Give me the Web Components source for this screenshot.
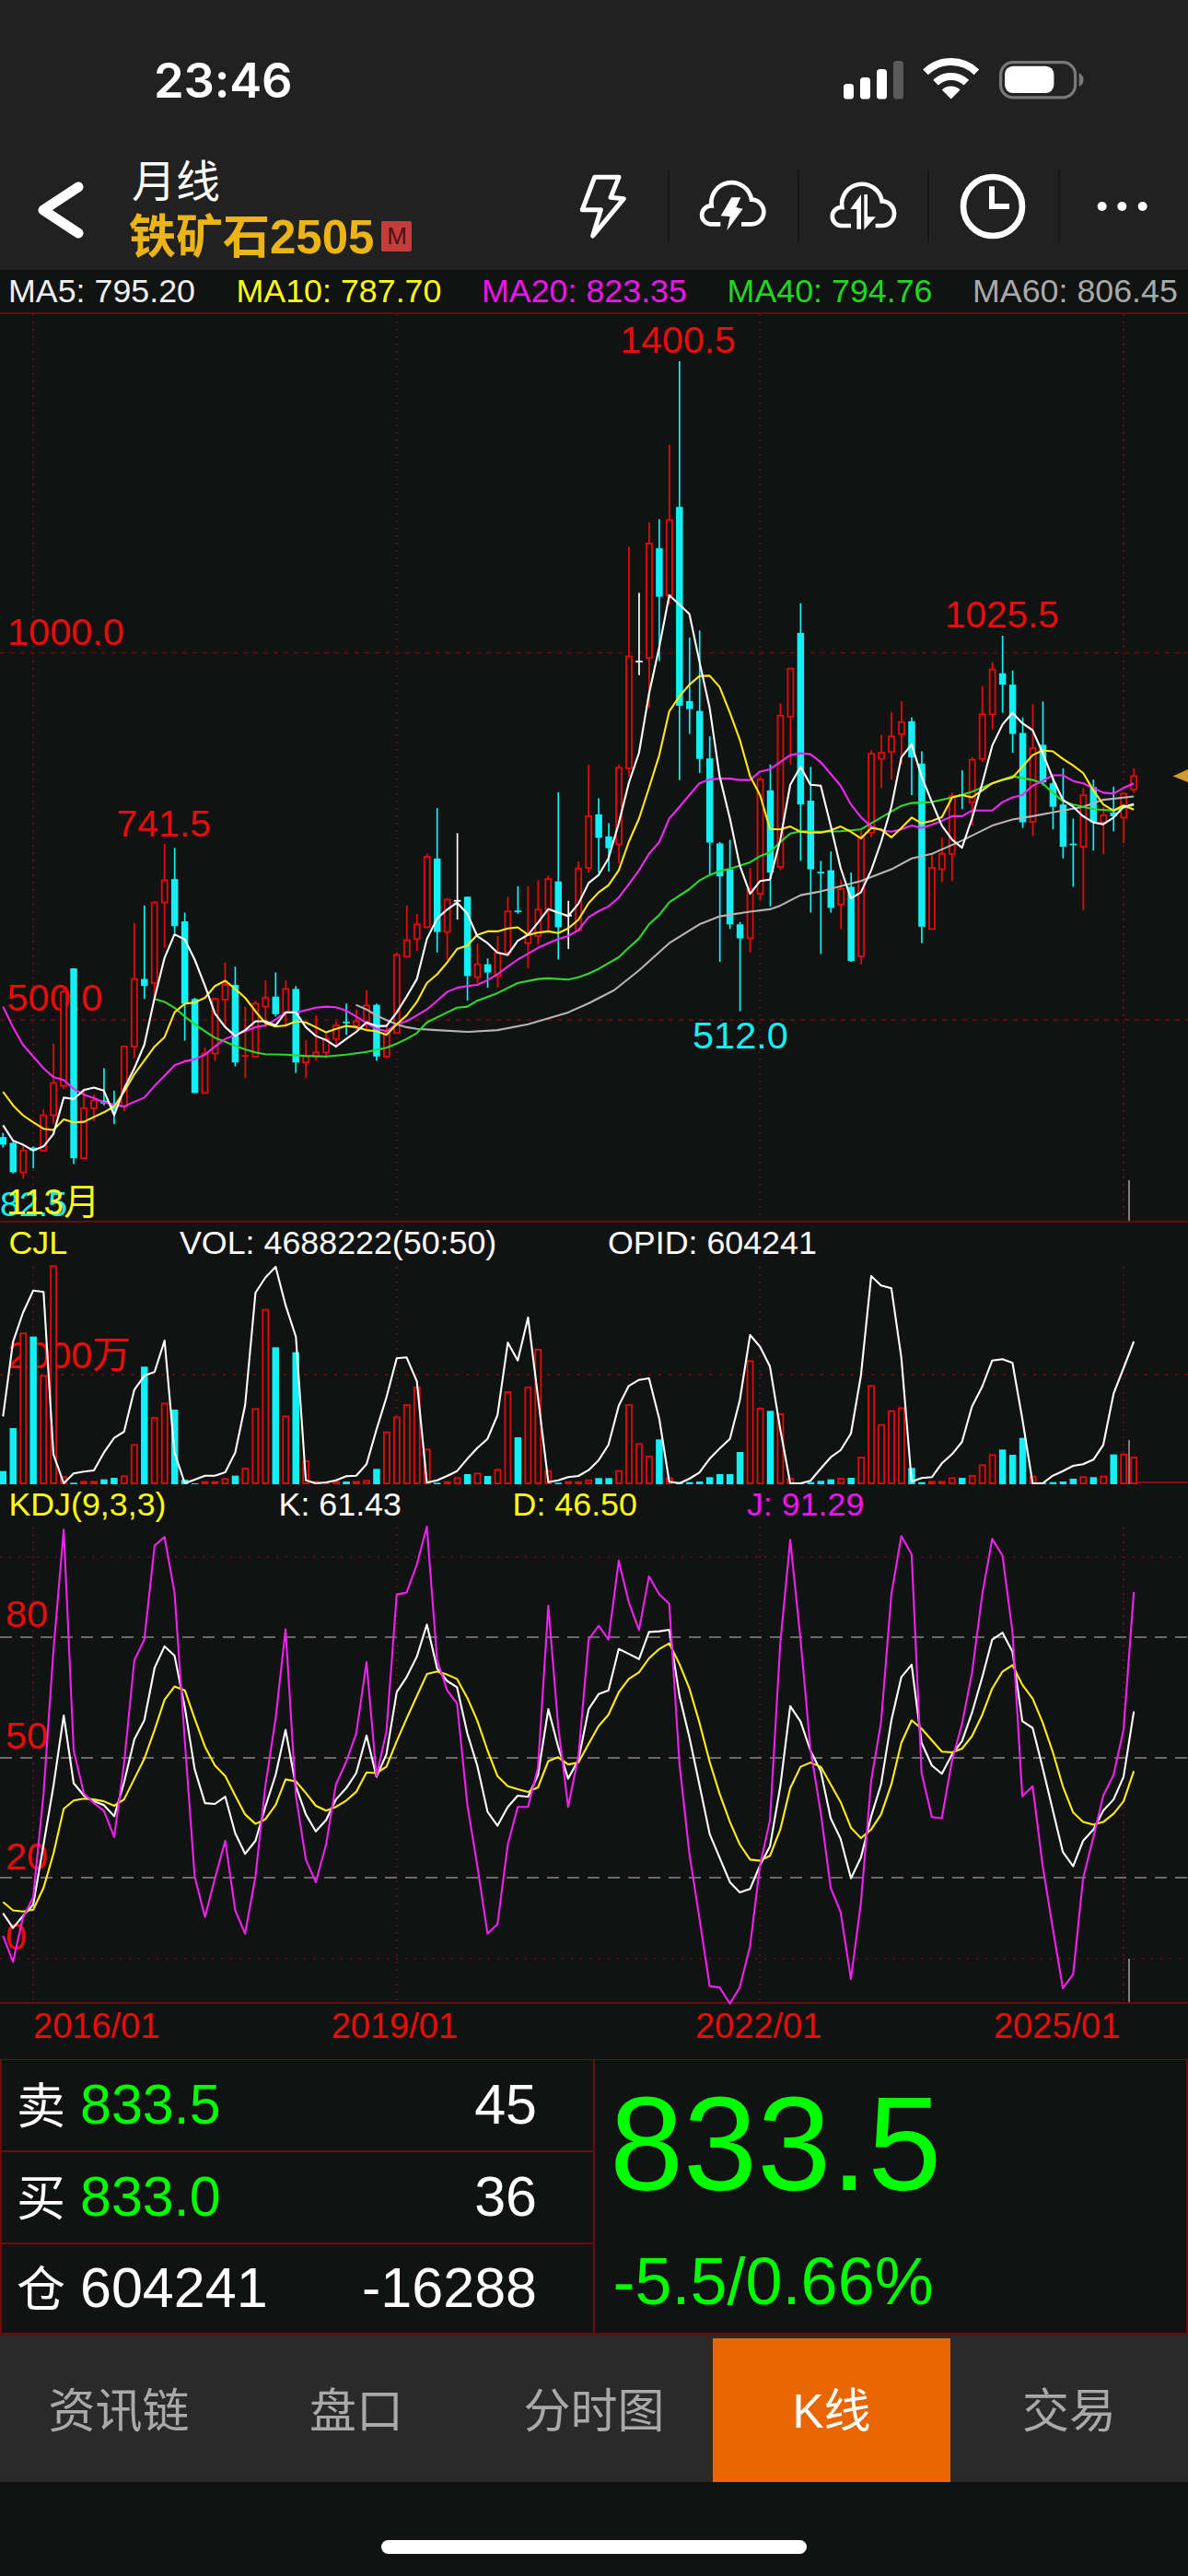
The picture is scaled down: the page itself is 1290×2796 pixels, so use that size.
<!DOCTYPE html>
<html lang="zh"><head><meta charset="utf-8"><title>K线</title>
<style>
html,body{margin:0;padding:0;background:#101311;}
body{width:1290px;height:2796px;overflow:hidden;font-family:"Liberation Sans","Noto Sans CJK SC",sans-serif;color:#fff;}
</style></head><body>
<status-bar></status-bar>
<nav-bar></nav-bar>
<ma-legend>
  <span style="color:#f0f0f0">MA5: 795.20</span>
  <span style="color:#ffff14">MA10: 787.70</span>
  <span style="color:#f014f0">MA20: 823.35</span>
  <span style="color:#1fd81f">MA40: 794.76</span>
  <span style="color:#a9a9a9">MA60: 806.45</span>
</ma-legend>
<chart-panel kind="price"></chart-panel>
<chart-panel kind="vol" columns="185.6px 465px auto">
  <span style="color:#ffff14">CJL</span>
  <span>VOL: 4688222(50:50)</span>
  <span>OPID: 604241</span>
</chart-panel>
<chart-panel kind="kdj" columns="293.2px 254px 254.4px auto">
  <span style="color:#ffff14">KDJ(9,3,3)</span>
  <span>K: 61.43</span>
  <span style="color:#ffff14">D: 46.50</span>
  <span style="color:#f014f0">J: 91.29</span>
</chart-panel>
<date-axis><span>2016/01</span><span>2019/01</span><span>2022/01</span><span>2025/01</span></date-axis>
<quote-panel></quote-panel>
<tab-bar>
  <tab-item>资讯链</tab-item><tab-item>盘口</tab-item><tab-item>分时图</tab-item><tab-item active>K线</tab-item><tab-item>交易</tab-item>
</tab-bar>
<home-bar></home-bar>
<script>
const FONT='"Liberation Sans","Noto Sans CJK SC",sans-serif';
const LINE='#6b0b0b';
function el(name,html){customElements.define(name,class extends HTMLElement{constructor(){super();this.attachShadow({mode:'open'}).innerHTML=html;}});}

el('status-bar',`<style>:host{display:flex;height:170px;box-sizing:border-box;background:#212121;justify-content:space-between;align-items:flex-start}
.t{font:600 52.5px/54px Inter,sans-serif;color:#fff;margin:60px 0 0 167px;letter-spacing:-.2px}
svg{margin:55px 100px 0 0;display:block}</style>
<div class="t">23:46</div>
<svg width="290" height="65" viewBox="900 55 290 65">
<g fill="#fff"><rect x="916" y="91" width="11" height="16.5" rx="3.6"/><rect x="934" y="84" width="11" height="23.5" rx="3.6"/><rect x="952" y="75" width="11" height="32.5" rx="3.6"/></g>
<rect x="970" y="66" width="11" height="41.5" rx="3.6" fill="#5a5a5a"/>
<g fill="none" stroke="#fff" stroke-width="8"><path d="M1005 79A39.5 39.5 0 0 1 1060.4 79" transform="translate(0 -.6)"/><path d="M1016 89.7A24 24 0 0 1 1049.4 89.7"/></g>
<path d="M1032.7 107.5L1022.8 97.4A14.2 14.2 0 0 1 1042.6 97.4Z" fill="#fff"/>
<rect x="1086.6" y="67.6" width="81" height="38.2" rx="13.5" fill="none" stroke="#787878" stroke-width="3.3"/>
<rect x="1091" y="71.7" width="53.4" height="29.4" rx="9" fill="#fff"/>
<path d="M1171.7 79.3A8 8 0 0 1 1171.7 94Z" fill="#787878"/>
</svg>`);

el('nav-bar',`<style>:host{display:flex;height:123px;background:#212121;position:relative}
.back{display:block;margin:20px 0 0 35px;flex:none}
.title{margin-left:40px;font-family:${FONT};flex:none}
.a{font-size:48px;line-height:52px;color:#fff;margin:2px 0 0 3px}
.b{display:flex;align-items:center;height:56px;margin-top:1px;font-size:51px;font-weight:700;color:#ebb417}
.b b{width:33px;height:33px;margin:6px 0 0 8px;background:#c43c3c;border-radius:2px;color:#4c1212;font:400 26px/33px "Liberation Sans",sans-serif;text-align:center}
.acts{margin-left:auto;display:grid;grid-template-columns:repeat(4,141.3px) 139.3px;height:78px;margin-top:15px}
.acts div{box-shadow:inset -2px 0 #161616;display:flex;justify-content:center}
.acts div:last-child{box-shadow:none}
svg.i{display:block}
</style>
<svg class="back" width="65" height="75" viewBox="35 190 65 75"><polyline points="85,203 47,228 85,253" fill="none" stroke="#fff" stroke-width="11" stroke-linecap="round" stroke-linejoin="round"/></svg>
<div class="title"><div class="a">月线</div><div class="b"><span>铁矿石2505</span><b>M</b></div></div>
<div class="acts">
<div><svg class="i" width="90" height="78" viewBox="4 30 270 234"><path d="M108 52H187L160 118L203 122L102 243L128 158L68 158Z" fill="none" stroke="#fff" stroke-width="15" stroke-linejoin="round"/></svg></div>
<div><svg class="i" width="90" height="78" viewBox="428 30 270 234"><path d="M519 205H487A30 30 0 0 1 490 145A65 65 0 0 1 620 125A40 40 0 0 1 620 205H587" fill="none" stroke="#fff" stroke-width="14"/><path d="M555 118H585L570 150L592 155L540 226L550 180L520 178Z" fill="#fff"/></svg></div>
<div><svg class="i" width="90" height="78" viewBox="852 30 270 234"><path transform="translate(423 5)" d="M519 205H487A30 30 0 0 1 490 145A65 65 0 0 1 620 125A40 40 0 0 1 620 205H599" fill="none" stroke="#fff" stroke-width="14"/><path d="M975 108V221H961V156H940Z M985 108H996V181H1023L985 223Z" fill="#fff"/></svg></div>
<div><svg class="i" width="90" height="78" viewBox="105 30 270 234"><circle cx="234" cy="147" r="96" fill="none" stroke="#fff" stroke-width="20"/><path d="M231 82V147H288" fill="none" stroke="#fff" stroke-width="18"/></svg></div>
<div><svg class="i" width="90" height="78" viewBox="526 30 270 234"><g fill="#fff"><circle cx="591" cy="147" r="15"/><circle cx="656" cy="147" r="15"/><circle cx="723" cy="147" r="15"/></g></svg></div>
</div>`);

el('ma-legend',`<style>:host{display:grid;grid-template-columns:247.5px 266.5px 266.6px 266.4px auto;box-sizing:border-box;height:46px;padding-left:9px;background:#101311;font:35.8px/46px ${FONT};white-space:nowrap}</style><slot></slot>`);

/* --- chart data, traced in crop coordinates --- */
const P2=(x,y)=>[x/2.412,340+y/1.568], P3=(x,y)=>[640+x/2.412,340+y/1.96];
const V4=(x,y)=>[x/2.412,1320+y/3], V5=(x,y)=>[640+x/2.412,1320+y/3];
const K6=(x,y)=>[x/2.412,1600+y/2.45], K7=(x,y)=>[640+x/2.412,1600+y/2.45];
const CX=i=>3.3+10.963*i;
const CANDLE2=`c 1395 1402 1415 1420|c 1410 1412 1462 1464|r 1415 1425 1462 1473|c 1418 1420 1425 1455|r 1355 1365 1425 1426|r 1243 1310 1365 1380|r 1150 1155 1315 1320|c 1115 1115 1438 1448|r 1320 1353 1438 1439|r 1330 1340 1353 1375|c 1285 1340 1345 1348|c 1323 1345 1355 1380|r 1248 1248 1350 1358|r 1038 1133 1248 1268|c 1008 1133 1145 1167|r 1000 1003 1140 1165|r 903 965 1003 1080|c 910 963 1043 1055|c 1020 1035 1175 1238|c 1165 1167 1327 1327|r 1250 1260 1327 1327|r 1165 1167 1260 1272|r 1105 1143 1168 1215|c 1112 1143 1275 1282|r 1180 1264 1264 1302|r 1170 1175 1265 1267|r 1135 1165 1180 1215|c 1122 1163 1193 1197|r 1135 1150 1190 1215|c 1145 1150 1275 1293|r 1237 1265 1275 1302|r 1195 1258 1265 1272|r 1225 1235 1258 1268|r 1205 1212 1235 1250|c 1175 1207 1207 1228|r 1185 1205 1213 1220|r 1152 1178 1205 1220|c 1175 1177 1265 1272|r 1210 1225 1265 1268|r 1088 1092 1225 1226|r 1008 1067 1095 1096|r 1022 1040 1065 1085|r 920 925 1045 1046|c 842 928 1053 1088|r 995 998 1053 1100|w 885 1000 1000 1032|c 993 993 1128 1170|r 1073 1108 1130 1140|c 1098 1108 1122 1148|r 1060 1088 1128 1148|r 993 1018 1088 1095|c 975 1018 1018 1022|r 975 1058 1072 1115|r 965 1015 1060 1075|r 957 963 1015 1050|c 815 967 1045 1100|w 1000 1025 1025 1082|r 933 945 1050 1052`;
const CANDLE3=`r 960 1070 1180 1190|c 1032 1066 1116 1190|c 1085 1113 1138 1188|r 960 967 1130 1170|r 497 730 968 985|w 595 741 741 770|r 445 490 733 840|c 438 500 603 740|r 280 440 600 620|c 102 412 835 993|c 690 825 842 895|c 675 846 948 978|c 900 947 1126 1195|c 1125 1128 1198 1380|c 1120 1183 1300 1310|c 1295 1300 1330 1485|r 1180 1225 1330 1360|r 985 992 1235 1250|c 960 1015 1190 1262|r 830 856 1178 1185|r 755 756 858 960|c 617 680 1045 1165|c 965 1037 1183 1275|c 1165 1190 1190 1363|c 1145 1185 1265 1275|r 1205 1225 1258 1310|c 1190 1220 1378 1380|r 1100 1115 1368 1385|r 930 937 1105 1115|r 897 935 948 1010|r 848 900 933 992|r 825 870 895 960|c 860 868 945 1025|c 932 958 1305 1340|r 1150 1180 1310 1310|r 1115 1150 1183 1210|r 1020 1027 1150 1208|c 972 1025 1025 1055|r 945 950 1040 1090|r 793 853 948 955|r 742 758 853 885|c 686 766 790 850|c 760 790 895 935|c 860 893 1083 1095|r 832 925 1082 1112|c 826 918 998 1005|c 985 1000 1050 1098|c 968 1045 1135 1160|c 1075 1130 1130 1220|r 1010 1025 1135 1270|c 992 1008 1083 1143|r 1050 1068 1083 1150|c 1007 1062 1070 1102|r 1020 1022 1073 1127|r 968 985 1013 1020`;
const SERIES={
 ma5:['#ffffff',`8,1382 34,1408 60,1415 87,1425 114,1418 140,1397 167,1335 193,1337 220,1322 246,1318 272,1323 299,1365 325,1320 352,1285 378,1245 405,1165 431,1097 457,1057 484,1066 510,1100 537,1145 563,1192 590,1215 616,1230 642,1220 669,1205 695,1205 722,1212 748,1190 775,1190 801,1215 827,1230 854,1237 880,1248 907,1235 933,1223 960,1207 986,1213 1012,1213 1039,1190 1065,1163 1092,1133 1118,1065 1145,1030 1171,1015 1197,1003 1224,1022 1250,1060 1277,1072 1303,1088 1330,1092 1356,1068 1383,1058 1409,1037 1436,1014 1462,1020 1488,1026 1515,1005`,
 `-2,1212 24,1195 50,1160 77,1085 103,1000 130,935 156,810 183,710 209,600 236,620 262,640 288,740 315,840 341,985 368,1075 394,1175 421,1235 447,1208 473,1205 500,1120 526,1003 553,965 579,1003 606,1005 632,1090 658,1180 685,1245 711,1232 738,1185 764,1125 791,1050 817,945 844,917 870,985 897,1040 923,1090 950,1120 976,1137 1002,1075 1029,1000 1055,920 1082,875 1108,850 1134,872 1161,887 1187,935 1214,990 1240,1035 1267,1050 1293,1070 1320,1083 1346,1087 1373,1073 1399,1050 1426,1044`],
 ma10:['#ffe91a',`8,1325 34,1348 60,1365 87,1377 114,1388 140,1390 167,1372 193,1377 220,1376 246,1368 272,1360 299,1350 325,1325 352,1295 378,1272 405,1248 431,1232 457,1190 484,1175 510,1173 537,1165 563,1145 590,1136 616,1150 642,1165 669,1188 695,1208 722,1214 748,1212 775,1205 801,1207 827,1215 854,1224 880,1218 907,1213 933,1215 960,1220 986,1222 1012,1228 1039,1210 1065,1195 1092,1172 1118,1140 1145,1125 1171,1105 1197,1082 1224,1076 1250,1058 1277,1052 1303,1052 1330,1047 1356,1045 1383,1058 1409,1054 1436,1052 1462,1055 1488,1047 1515,1032`,
 `-2,1255 24,1232 50,1217 77,1185 103,1125 130,1075 156,1010 183,940 209,847 236,815 262,790 288,772 315,771 341,795 368,850 394,907 421,985 447,1025 473,1097 500,1098 526,1092 553,1103 579,1105 606,1105 632,1100 658,1092 685,1103 711,1117 738,1095 764,1098 791,1115 817,1095 844,1073 870,1085 897,1080 923,1072 950,1030 976,1025 1002,1030 1029,1015 1055,1000 1082,993 1108,988 1134,965 1161,940 1187,930 1214,932 1240,948 1267,962 1293,978 1320,1015 1346,1045 1373,1058 1399,1047 1426,1056`],
 ma20:['#f02af0',`8,1180 34,1215 60,1245 87,1265 114,1285 140,1300 167,1305 193,1320 220,1330 246,1336 272,1343 299,1347 325,1350 352,1342 378,1335 405,1315 431,1298 457,1280 484,1273 510,1270 537,1262 563,1248 590,1235 616,1228 642,1222 669,1215 695,1212 722,1202 748,1190 775,1190 801,1186 827,1182 854,1180 880,1181 907,1187 933,1197 960,1208 986,1218 1012,1222 1039,1210 1065,1205 1092,1195 1118,1185 1145,1170 1171,1155 1197,1148 1224,1145 1250,1143 1277,1135 1303,1125 1330,1112 1356,1100 1383,1090 1409,1080 1436,1072 1462,1065 1488,1060 1515,1050`,
 `-2,1285 24,1272 50,1262 77,1243 103,1215 130,1185 156,1150 183,1125 209,1075 236,1050 262,1025 288,1000 315,992 341,990 368,990 394,993 421,993 447,975 473,970 500,955 526,940 553,936 579,938 606,955 632,980 658,1005 685,1045 711,1072 738,1092 764,1100 791,1103 817,1098 844,1090 870,1095 897,1088 923,1080 950,1070 976,1070 1002,1058 1029,1058 1055,1058 1082,1040 1108,1030 1134,1025 1161,1005 1187,995 1214,983 1240,983 1267,995 1293,1000 1320,1010 1346,1020 1373,1022 1399,1010 1426,1000`],
 ma40:['#2fd82f',`405,1167 431,1172 457,1182 484,1197 510,1210 537,1222 563,1233 590,1240 616,1247 642,1253 669,1258 695,1261 748,1262 801,1264 854,1265 907,1262 960,1257 1012,1250 1039,1243 1065,1235 1092,1225 1118,1207 1171,1190 1197,1182 1224,1180 1250,1170 1303,1157 1356,1140 1409,1133 1436,1132 1488,1134 1515,1130`,
 `-2,1405 24,1395 77,1370 103,1350 130,1330 156,1300 183,1280 209,1253 262,1225 288,1207 315,1195 341,1187 368,1182 421,1168 447,1155 473,1147 500,1125 526,1107 553,1102 606,1103 658,1102 711,1098 738,1085 791,1060 817,1048 844,1042 897,1040 950,1030 1002,1018 1055,1000 1108,985 1161,993 1187,1000 1214,1020 1240,1038 1267,1045 1293,1050 1320,1055 1373,1058 1426,1046`],
 ma60:['#b4b4b4',`932,1177 960,1185 986,1195 1012,1203 1039,1210 1065,1215 1092,1218 1145,1220 1224,1223 1303,1220 1383,1210 1488,1190`,
 `-2,1468 65,1440 130,1398 209,1340 288,1300 341,1283 421,1273 473,1268 500,1260 553,1238 606,1230 711,1208 791,1183 844,1160 897,1150 976,1122 1055,1090 1108,1077 1161,1070 1214,1062 1293,1050 1346,1035 1426,1028`],
 opid:['#ffffff',`8,652 34,410 60,315 87,242 114,247 140,775 167,870 193,838 220,832 246,828 272,770 299,722 325,702 352,565 378,520 405,507 431,405 457,770 484,870 510,858 537,845 563,845 590,834 616,770 642,615 669,250 695,200 722,165 748,290 775,393 801,860 827,870 854,867 880,860 907,847 933,845 960,808 986,695 1012,590 1039,463 1065,460 1092,538 1118,868 1145,860 1171,846 1197,830 1224,790 1250,755 1277,725 1303,648 1330,412 1356,470 1383,330 1409,590 1436,866 1462,860 1488,850 1515,846`,
 `-2,827 24,795 50,745 77,617 103,553 130,533 156,528 183,660 209,865 236,870 262,855 288,835 315,790 341,757 368,725 394,600 421,387 447,425 473,490 500,695 526,870 553,870 579,862 606,822 632,785 658,762 685,708 711,520 738,195 764,226 791,235 817,460 844,865 870,853 897,850 923,805 950,775 976,735 1002,620 1029,555 1055,470 1082,466 1108,478 1134,660 1161,870 1187,870 1214,845 1240,830 1267,813 1293,808 1320,793 1346,745 1373,578 1399,495 1426,408`],
 k:['#ffffff',`8,1168 34,1207 60,1175 87,1145 114,985 140,830 167,642 193,822 220,855 246,870 272,880 299,910 325,820 352,705 378,655 405,515 431,458 457,483 484,620 510,785 537,875 563,877 590,858 616,955 642,1010 669,975 695,885 722,800 748,680 775,830 801,905 827,950 854,920 880,865 907,835 933,795 960,695 986,805 1012,745 1039,580 1065,540 1092,485 1118,400 1145,517 1171,550 1197,567 1224,690 1250,775 1277,898 1303,935 1330,885 1356,855 1383,858 1409,800 1436,625 1462,725 1488,810 1515,760`,
 `-2,625 24,585 50,575 77,465 103,478 130,492 156,420 183,418 209,414 236,590 262,700 288,825 315,957 341,1020 368,1085 394,1112 421,1103 447,1040 473,990 500,830 526,617 553,658 579,735 606,790 632,915 658,970 685,1075 711,1020 738,910 764,825 791,655 817,540 844,507 870,715 897,775 923,797 950,745 976,710 1002,635 1029,540 1055,440 1082,422 1108,472 1134,657 1161,675 1187,780 1214,895 1240,1005 1267,1043 1293,975 1320,945 1346,895 1373,865 1399,805 1426,631`],
 d:['#ffee1a',`8,1138 34,1160 60,1163 87,1158 114,1100 140,1010 167,890 193,868 220,863 246,865 272,870 299,882 325,865 352,810 378,757 405,680 431,600 457,565 484,575 510,650 537,725 563,775 590,803 616,855 642,905 669,930 695,918 722,880 748,812 775,817 801,848 827,882 854,895 880,885 907,868 933,845 960,793 986,795 1012,778 1039,710 1065,650 1092,590 1118,532 1145,525 1171,533 1197,545 1224,595 1250,655 1277,735 1303,803 1330,830 1356,838 1383,845 1409,833 1436,763 1462,753 1488,772 1515,767`,
 `-2,717 24,670 50,640 77,580 103,545 130,527 156,490 183,465 209,450 236,505 262,570 288,660 315,765 341,850 368,925 394,985 421,1025 447,1028 473,1015 500,945 526,835 553,778 579,767 606,778 632,825 658,872 685,940 711,968 738,945 764,905 791,825 817,715 844,655 870,677 897,708 923,738 950,740 976,730 1002,697 1029,640 1055,570 1082,525 1108,508 1134,560 1161,597 1187,660 1214,740 1240,830 1267,900 1293,925 1320,932 1346,925 1373,903 1399,870 1426,790`],
 j:['#ef22ef',`8,1228 34,1297 60,1180 87,1125 114,850 140,470 167,148 193,735 220,850 246,875 272,895 299,965 325,770 352,495 378,440 405,190 431,167 457,315 484,710 510,1070 537,1178 563,1075 590,975 616,1160 642,1222 669,1070 695,830 722,650 748,413 775,855 801,1025 827,1085 854,985 880,825 907,765 933,690 960,500 986,803 1012,685 1039,320 1065,315 1092,240 1118,140 1145,495 1171,575 1197,610 1224,880 1250,1040 1277,1222 1303,1197 1330,985 1356,885 1383,885 1409,780 1436,350 1462,670 1488,885 1515,750`,
 `-2,440 24,403 50,440 77,230 103,340 130,415 156,272 183,320 209,345 236,770 262,1010 288,1180 315,1362 341,1365 368,1408 394,1365 421,1255 447,1040 473,920 500,450 526,175 553,440 579,730 606,900 632,1100 658,1165 685,1343 711,1140 738,815 764,660 791,320 817,165 844,213 870,795 897,912 923,915 950,760 976,665 1002,530 1029,320 1055,172 1082,217 1108,420 1134,857 1161,830 1187,1040 1214,1210 1240,1367 1267,1330 1293,1075 1320,965 1346,855 1373,800 1399,680 1426,313`]
};
const VOL2=`c830 c690 r382 c392 r520 r163 r850 c868 r865 r865 c857 c852 r847 r745 c490 r657 r610 c630 c858 c870 r866 r866 r856 c845 r822 r628 r305 c427 r652 c443 r798 r865 r868 r865 c864 r865 r862 c823 r704 r655 r615 r558 r760 c868 r866 r853 c840 r838 c846 r826 r573 c720 r558 r435 r830 c868 r866 r866`;
const VOL3=`r860 c853 c853 r830 r615 r742 r783 c727 r853 c866 c866 c864 c850 c840 c840 c768 r472 r627 c634 r645 r855 c868 c866 c862 c857 r855 c852 r786 r553 r680 r635 r625 c820 c866 r865 r865 r853 c852 r846 r811 r778 c760 c777 c722 r848 c868 c866 c864 c855 r850 c850 r848 c776 r776 r786`;

const RED='#e60a0a',CY='#12f0f6',REDTXT='#e80c0c';
function line(name,A,B){
  const [c,a,b]=SERIES[name];
  const pts=[...a.split(' ').map(s=>A(...s.split(',').map(Number))),...b.split(' ').map(s=>B(...s.split(',').map(Number)))];
  return `<polyline fill="none" stroke="${c}" stroke-width="2.1" stroke-linejoin="round" points="${pts.map(p=>p[0].toFixed(1)+','+p[1].toFixed(1)).join(' ')}"/>`;
}
function candles(){
  let s='';
  const draw=(str,Y,off)=>str.split('|').forEach((r,k)=>{
    const [c,h,t,b,l]=r.split(' ');const f=v=>Y(0,+v)[1];
    const x=CX(k+off),H=f(h),T=f(t),B=f(b),L=f(l);
    if(c==='c'||c==='w'){
      const col=c==='c'?CY:'#fff';
      s+=`<line x1="${x}" x2="${x}" y1="${H}" y2="${L}" stroke="${col}" stroke-width="1.7"/>`;
      if(B-T<2)s+=`<line x1="${x-3.8}" x2="${x+3.8}" y1="${T}" y2="${T}" stroke="${col}" stroke-width="1.8"/>`;
      else s+=`<rect x="${x-3.75}" y="${T}" width="7.5" height="${B-T}" fill="${col}"/>`;
    }else{
      s+=`<line x1="${x}" x2="${x}" y1="${H}" y2="${T}" stroke="${RED}" stroke-width="1.8"/><line x1="${x}" x2="${x}" y1="${B}" y2="${L}" stroke="${RED}" stroke-width="1.8"/>`;
      if(B-T<2)s+=`<line x1="${x-3.8}" x2="${x+3.8}" y1="${T}" y2="${T}" stroke="${RED}" stroke-width="1.8"/>`;
      else s+=`<rect x="${x-3}" y="${T}" width="6" height="${B-T}" fill="#101311" stroke="${RED}" stroke-width="1.8"/>`;
    }
  });
  draw(CANDLE2,P2,0);draw(CANDLE3,P3,58);
  return s;
}
function volbars(){
  let s='';const base=1611;
  [...VOL2.split(' ').map(v=>[v[0],1320+ +v.slice(1)/3]),...VOL3.split(' ').map(v=>[v[0],1320+ +v.slice(1)/3])].forEach(([c,y],i)=>{
    const x=CX(i);
    if(c==='c')s+=`<rect x="${x-3.75}" y="${y}" width="7.5" height="${base-y}" fill="${CY}"/>`;
    else s+=`<rect x="${x-3}" y="${y}" width="6" height="${base-y-.9}" fill="#101311" stroke="${RED}" stroke-width="1.8"/>`;
  });
  return s;
}
const GX=[36,431,825,1220];
const vgrid=(a,b)=>GX.map(x=>`<line x1="${x}" x2="${x}" y1="${a}" y2="${b}" stroke="#5c0e0e" stroke-width="2" stroke-dasharray="2 6"/>`).join('');
const hgrid=(y,d='5 6')=>`<line x1="0" x2="1290" y1="${y}" y2="${y}" stroke="#5c0e0e" stroke-width="1.8" stroke-dasharray="${d}"/>`;
const txt=(x,y,s,c,size=41.5)=>`<text x="${x}" y="${y}" fill="${c}" font-size="${size}">${s}</text>`;
const tick=(a,b)=>`<line x1="1226" x2="1226" y1="${a}" y2="${b}" stroke="#9a9a9a" stroke-width="1.6"/>`;

const VIEWS={
 price:{y:341,h:984,draw(){return vgrid(341,1325)+hgrid(708.6)+hgrid(1107)
  +txt(8,700,'1000.0',REDTXT)+txt(7.5,1097,'500.0',REDTXT)+txt(126.5,907.5,'741.5',REDTXT,41)+txt(673.5,383,'1400.5',REDTXT,41)+txt(1026,681,'1025.5',REDTXT,40.5)+txt(752,1138,'512.0',CY)
  +candles()+line('ma60',P2,P3)+line('ma40',P2,P3)+line('ma20',P2,P3)+line('ma10',P2,P3)+line('ma5',P2,P3)
  +txt(0,1320,'82.5',CY,37.5)+txt(7,1318,'113月','#ffff14',39)
  +tick(1281,1325)+`<polygon points="1273.5,842.5 1290,835 1290,849" fill="#d39b2e"/>`;}},
 vol:{y:1372,h:240,draw(){return vgrid(1375,1611)+hgrid(1492,'3 8')
  +txt(8,1485,'2000万','#f00a0a')+volbars()+line('opid',V4,V5)
  +`<line x1="1235" x2="1290" y1="1609" y2="1609" stroke="#8a0e0e" stroke-width="1.8"/>`+tick(1563,1611);}},
 kdj:{y:1656,h:517,draw(){return vgrid(1657,2173)+hgrid(1690,'2 8')+hgrid(2126,'2 8')
  +[1777,1908,2038].map(y=>`<line x1="0" x2="1290" y1="${y}" y2="${y}" stroke="#6a6a6a" stroke-width="1.9" stroke-dasharray="13 9"/>`).join('')
  +txt(6,1766,'80',REDTXT)+txt(6,1898,'50',REDTXT)+txt(6,2028.5,'20',REDTXT)+txt(6,2116,'0',REDTXT)
  +line('k',K6,K7)+line('d',K6,K7)+line('j',K6,K7)+tick(2126,2173);}}
};
customElements.define('chart-panel',class extends HTMLElement{
  constructor(){super();this.attachShadow({mode:'open'});}
  connectedCallback(){
    const kind=this.getAttribute('kind'),v=VIEWS[kind];
    const legend=this.getAttribute('columns')?`<div class="l" style="grid-template-columns:${this.getAttribute('columns')}"><slot></slot></div>`:'';
    this.shadowRoot.innerHTML=`<style>:host{display:block;background:#101311;font:35.8px ${FONT}}
    :host([kind=price]){border-top:2px solid ${LINE};border-bottom:2px solid ${LINE}}
    .l{display:grid;padding-left:9.4px;white-space:nowrap;line-height:${kind==='vol'?45:42}px;height:${kind==='vol'?45:44}px;box-sizing:border-box}
    svg{display:block;overflow:${kind==='kdj'?'visible':'hidden'};font-family:${FONT}}</style>${legend}
    <svg width="1290" height="${v.h}" viewBox="0 ${v.y} 1290 ${v.h}">${v.draw()}</svg>`;
  }
});

el('date-axis',`<style>:host{display:grid;grid-template-columns:323.7px 395.3px 324px auto;box-sizing:border-box;height:64px;padding:0 0 12px 36px;border-top:2px solid ${LINE};border-bottom:2px solid ${LINE};background:#101311;color:${REDTXT};font:38px/48px ${FONT}}</style><slot></slot>`);

el('quote-panel',`<style>:host{display:grid;grid-template-columns:646px 1fr;height:298px;box-sizing:border-box;border:solid ${LINE};border-width:0 2px 2px 2px;background:#101311;font-family:${FONT};margin-top:-1px}
.left{display:grid;grid-template-rows:98px 100px 1fr;border-right:2px solid ${LINE};box-sizing:border-box;width:644px}
.r{display:flex;align-items:center;padding:0 61px 3px 16px;font-size:61px;color:#fff;white-space:nowrap}
.r+.r{border-top:2px solid ${LINE}}
.r i{font-style:normal;font-size:53px;width:69px;flex:none;margin-top:-3px}
.r u{text-decoration:none;color:#0f0}
.r em{font-style:normal;margin-left:auto}
.right{display:flex;flex-direction:column;gap:33px;padding:17px 0 0 14px;color:#0f0;white-space:nowrap}
.big{font-size:144px;line-height:150px}.sub{font-size:72px;line-height:80px;margin-left:3.5px}
</style>
<div class="left">
<div class="r"><i>卖</i><u>833.5</u><em>45</em></div>
<div class="r"><i>买</i><u>833.0</u><em>36</em></div>
<div class="r"><i>仓</i><span>604241</span><em>-16288</em></div>
</div>
<div class="right"><div class="big">833.5</div><div class="sub">-5.5/0.66%</div></div>`);

el('tab-bar',`<style>:host{display:grid;grid-template-columns:repeat(5,1fr);height:160px;background:#2a2a2a}</style><slot></slot>`);
customElements.define('tab-item',class extends HTMLElement{constructor(){super();this.attachShadow({mode:'open'}).innerHTML=`<style>:host{display:flex;align-items:center;justify-content:center;font:51px ${FONT};color:#a9a9a9;margin-top:4px;padding-bottom:6px;box-sizing:border-box}
:host([active]){background:#e96500;color:#fff;width:258px}</style><slot></slot>`;}});

el('home-bar',`<style>:host{display:flex;justify-content:center;height:102px;background:#101311;padding-top:63px;box-sizing:border-box}div{width:462px;height:15px;border-radius:8px;background:#fff}</style><div></div>`);
</script>
</body></html>
